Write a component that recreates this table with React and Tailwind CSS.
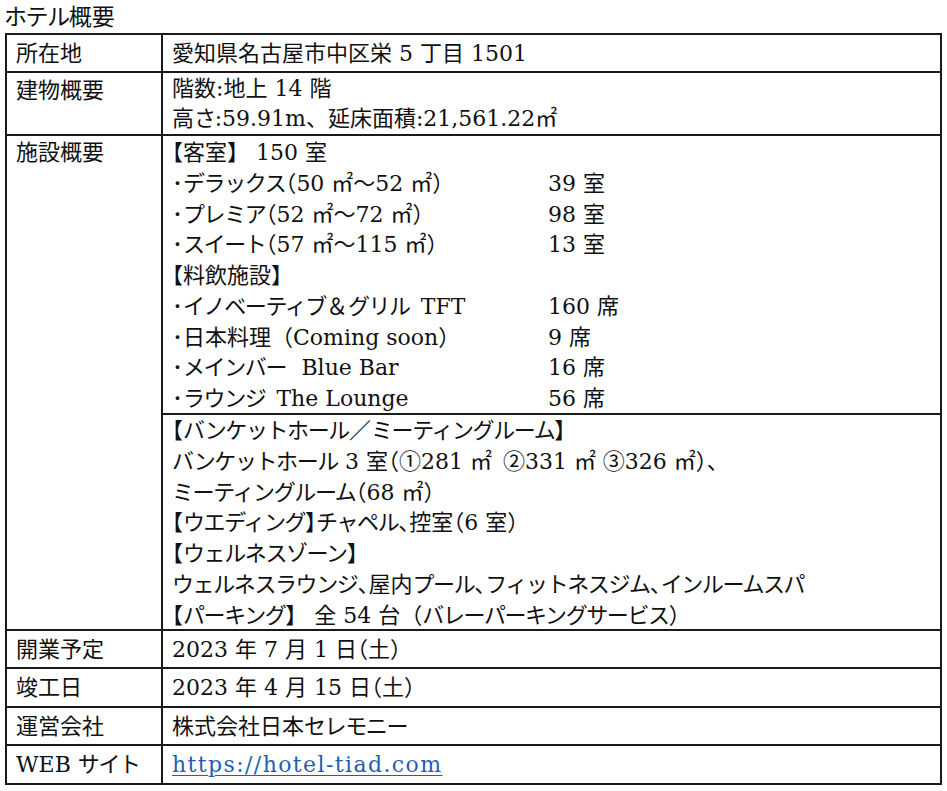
import React from "react";

const FONT = {
  fontFamily: '"DejaVu Serif", "Noto Sans CJK JP", serif',
};

const KANA = /[\u3041-\u30ff]/;

// "^" before a punctuation mark sets it in half width (OpenType halt).
function fmt(s) {
  const segs = [];
  let mark = false;
  for (const ch of s) {
    if (ch === "^") {
      mark = true;
      continue;
    }
    let type = "plain";
    if (mark) {
      type = "half";
      mark = false;
    } else if (KANA.test(ch)) {
      type = "kana";
    }
    const last = segs[segs.length - 1];
    if (last && last.type === type && (type === "kana" || type === "plain")) {
      last.text += ch;
    } else {
      segs.push({ type, text: ch });
    }
  }
  return (
    <span>
      {segs.map((g, i) => {
        if (g.type === "kana")
          return (
            <span key={i} className="tracking-[-1.4px]">
              {g.text}
            </span>
          );
        if (g.type === "half")
          return (
            <span key={i} className="[font-feature-settings:'halt']">
              {g.text}
            </span>
          );
        return <React.Fragment key={i}>{g.text}</React.Fragment>;
      })}
    </span>
  );
}

function Row({ label, h, children, last }) {
  return (
    <div
      className={`flex ${last ? "" : "border-b-2 border-[#1a1a1a]"}`}
      style={{ height: h }}
    >
      <div className="w-[156px] shrink-0 border-r-2 border-[#1a1a1a] pl-[9px] flex items-center whitespace-nowrap">
        {fmt(label)}
      </div>
      <div className="flex-1 pl-[9px] flex items-center whitespace-nowrap">
        {children}
      </div>
    </div>
  );
}

function Line({ left, right }) {
  return (
    <div className="flex h-[30.8px] items-center">
      <span className="w-[376px] shrink-0 whitespace-nowrap">{fmt(left)}</span>
      {right && <span className="whitespace-nowrap">{fmt(right)}</span>}
    </div>
  );
}

export default function App() {
  return (
    <div
      className="w-[947px] h-[791px] bg-white text-[#111] text-[22px] leading-[31px] overflow-hidden"
      style={FONT}
    >
      <div className="h-[33px] pl-[4px] pt-[3px] leading-[28px] text-[23px]">
        {fmt("ホテル概要")}
      </div>
      <div className="ml-[5px] w-[937px] border-2 border-[#1a1a1a]">
        <Row label="所在地" h="38px">
          {fmt("愛知県名古屋市中区栄 5 丁目 1501")}
        </Row>

        <div className="flex h-[63px] border-b-2 border-[#1a1a1a]">
          <div className="w-[156px] shrink-0 border-r-2 border-[#1a1a1a] pl-[9px] pt-[2px]">
            {fmt("建物概要")}
          </div>
          <div className="flex-1 pl-[9px] pt-[1px] leading-[30px] whitespace-nowrap">
            <div>{fmt("階数:地上 14 階")}</div>
            <div>{fmt("高さ:59.91m、延床面積:21,561.22㎡")}</div>
          </div>
        </div>

        <div className="flex border-b-2 border-[#1a1a1a]">
          <div className="w-[156px] shrink-0 border-r-2 border-[#1a1a1a] pl-[9px] pt-[1px]">
            {fmt("施設概要")}
          </div>
          <div className="flex-1 flex flex-col">
            <div className="h-[279px] border-b-2 border-[#1a1a1a] pl-[9px] pt-[1px]">
              <Line left="^【客室】 150 室" />
              <Line left="･デラックス^（50 ㎡～52 ㎡^）" right="39 室" />
              <Line left="･プレミア^（52 ㎡～72 ㎡^）" right="98 室" />
              <Line left="･スイート^（57 ㎡～115 ㎡^）" right="13 室" />
              <Line left="^【料飲施設^】" />
              <Line left={"･イノベーティブ＆グリル\u2002TFT"} right="160 席" />
              <Line left="･日本料理（Coming soon）" right="9 席" />
              <Line left={"･メインバー\u2002\u2009Blue Bar"} right="16 席" />
              <Line left={"･ラウンジ\u2002The Lounge"} right="56 席" />
            </div>
            <div className="h-[214px] pl-[9px] pt-[0px]">
              <Line left="^【バンケットホール／ミーティングルーム^】" />
              <Line left={"バンケットホール 3 室^（①281 ㎡\u2002②331 ㎡ ③326 ㎡）、"} />
              <Line left="ミーティングルーム^（68 ㎡^）" />
              <Line left="^【ウエディング^】チャペル^、控室^（6 室^）" />
              <Line left="^【ウェルネスゾーン^】" />
              <Line left="ウェルネスラウンジ^、屋内プール^、フィットネスジム^、インルームスパ" />
              <Line left="^【パーキング】 全 54 台（バレーパーキングサービス）" />
            </div>
          </div>
        </div>

        <Row label="開業予定" h="38px">
          {fmt("2023 年 7 月 1 日^（土^）")}
        </Row>
        <Row label="竣工日" h="39px">
          {fmt("2023 年 4 月 15 日^（土^）")}
        </Row>
        <Row label="運営会社" h="38px">
          {fmt("株式会社日本セレモニー")}
        </Row>
        <Row label="WEB サイト" h="37px" last>
          <a
            href="#"
            className="text-[#1f5fb0] underline decoration-1 underline-offset-[3px] tracking-[1.4px]"
          >
            https://hotel-tiad.com
          </a>
        </Row>
      </div>
    </div>
  );
}
